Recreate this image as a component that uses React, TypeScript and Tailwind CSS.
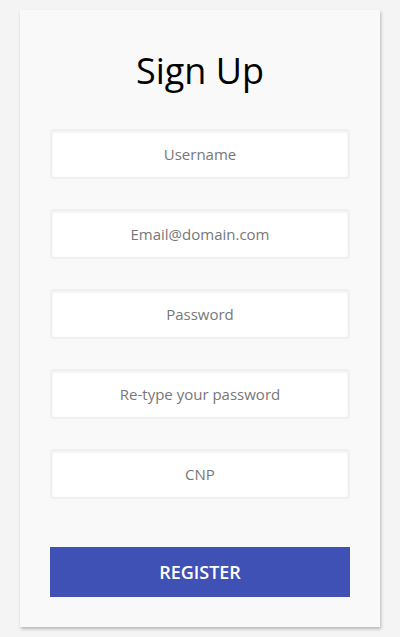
const FIELDS = ['Username', 'Email@domain.com', 'Password', 'Re-type your password', 'CNP']

export default function App() {
  return (
    <div
      className="min-h-[637px] bg-[#f4f4f4] pt-[10px] px-[20px]"
      style={{ fontFamily: '"Open Sans", "Noto Sans", sans-serif' }}
    >
      <div className="bg-[#f9f9f9] px-[30px] pt-[39px] pb-[30px] shadow-[1px_2px_3px_rgba(0,0,0,0.25)]">
        <h1 className="text-center text-[36px] leading-[44px] text-black m-0">Sign Up</h1>

        <div className="mt-[36px] flex flex-col gap-[30px]">
          {FIELDS.map((f) => (
            <input
              key={f}
              type={f.toLowerCase().includes('password') ? 'password' : 'text'}
              placeholder={f}
              className="h-[50px] w-full rounded-[3px] border-2 border-[#f0f0f0] bg-white text-center text-[15px] text-[#555] placeholder:text-[#777] shadow-[inset_0_1px_3px_rgba(0,0,0,0.08)] outline-none"
            />
          ))}
        </div>

        <button className="mt-[48px] h-[50px] w-full bg-[#3f51b5] text-white text-[18px] leading-[50px] font-semibold uppercase">
          Register
        </button>
      </div>
    </div>
  )
}
